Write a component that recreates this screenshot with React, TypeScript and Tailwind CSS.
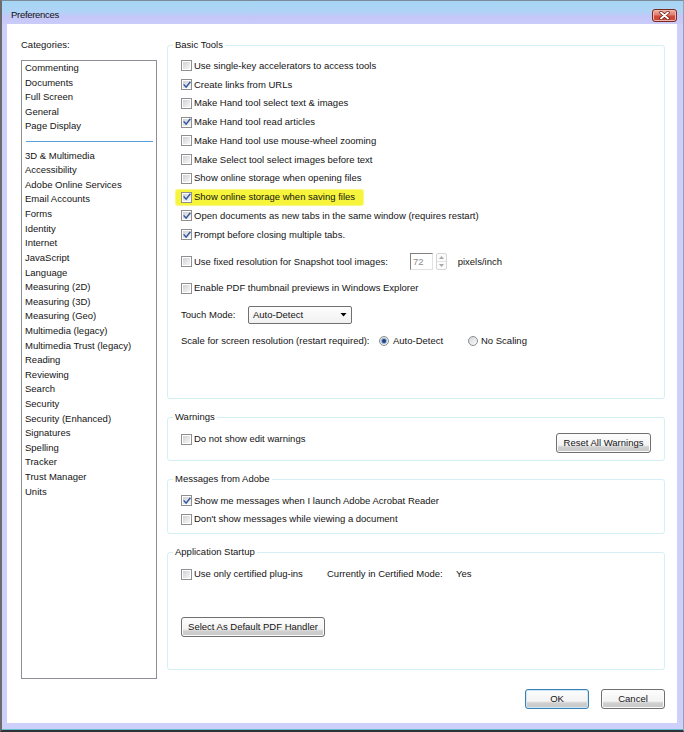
import React from "react";

function CheckMark() {
  return (
    <svg width="8" height="8" viewBox="0 0 8 8" className="block">
      <path d="M1.1 3.9 L3.1 6.1 L6.9 1.3" fill="none" stroke="#3356a0" strokeWidth="1.45" strokeLinecap="square" />
    </svg>
  );
}

function Check({ checked }: { checked?: boolean }) {
  return (
    <span className="w-[11px] h-[11px] shrink-0 border border-[#8f8f8f] bg-white p-px flex">
      <span className="flex-1 bg-[linear-gradient(135deg,#cfd1d5_0%,#f7f7f7_100%)] flex items-center justify-center">
        {checked && <CheckMark />}
      </span>
    </span>
  );
}

function Radio({ checked }: { checked?: boolean }) {
  return (
    <span className="w-[10px] h-[10px] shrink-0 rounded-full border border-[#8c8c8c] bg-[linear-gradient(135deg,#d4d6da_0%,#fbfbfb_100%)] flex items-center justify-center">
      {checked && <span className="w-[4px] h-[4px] rounded-full bg-[#23407a] shadow-[0_0_0_1px_#93b4dc]" />}
    </span>
  );
}

function CheckRow({ label, checked, className = "" }: { label: string; checked?: boolean; className?: string }) {
  return (
    <div className={`flex items-center gap-[2px] ${className}`}>
      <Check checked={checked} />
      <span className="whitespace-nowrap">{label}</span>
    </div>
  );
}

function Btn({ children, className = "", def }: { children: React.ReactNode; className?: string; def?: boolean }) {
  return (
    <div
      className={`flex items-center justify-center rounded-[3px] border whitespace-nowrap bg-[linear-gradient(to_bottom,#fdfdfd_0%,#f3f3f3_62%,#d0d0d0_72%,#c8c8c8_100%)] ${
        def ? "border-[#3c7fb1] shadow-[inset_0_0_0_1px_#cde8f8]" : "border-[#707070] shadow-[inset_0_0_0_1px_#fbfbfb]"
      } ${className}`}
    >
      {children}
    </div>
  );
}

function Group({ label, className = "", children }: { label: string; className?: string; children: React.ReactNode }) {
  return (
    <div className={`relative border border-[#d3f0f5] rounded-[3px] ${className}`}>
      <span className="absolute -top-[7px] left-[5px] bg-white px-[2px] leading-[12px] whitespace-nowrap">{label}</span>
      {children}
    </div>
  );
}

const categories = [
  "3D & Multimedia",
  "Accessibility",
  "Adobe Online Services",
  "Email Accounts",
  "Forms",
  "Identity",
  "Internet",
  "JavaScript",
  "Language",
  "Measuring (2D)",
  "Measuring (3D)",
  "Measuring (Geo)",
  "Multimedia (legacy)",
  "Multimedia Trust (legacy)",
  "Reading",
  "Reviewing",
  "Search",
  "Security",
  "Security (Enhanced)",
  "Signatures",
  "Spelling",
  "Tracker",
  "Trust Manager",
  "Units",
];

const topCats = ["Commenting", "Documents", "Full Screen", "General", "Page Display"];

const basic: { label: string; checked: boolean; hl?: boolean }[] = [
  { label: "Use single-key accelerators to access tools", checked: false },
  { label: "Create links from URLs", checked: true },
  { label: "Make Hand tool select text & images", checked: false },
  { label: "Make Hand tool read articles", checked: true },
  { label: "Make Hand tool use mouse-wheel zooming", checked: false },
  { label: "Make Select tool select images before text", checked: false },
  { label: "Show online storage when opening files", checked: false },
  { label: "Show online storage when saving files", checked: true, hl: true },
  { label: "Open documents as new tabs in the same window (requires restart)", checked: true },
  { label: "Prompt before closing multiple tabs.", checked: true },
];

export default function App() {
  return (
    <div className="w-[684px] h-[732px] flex flex-col border-l-[2px] border-l-[#6b6b6b] border-t border-t-[#7d8a98] border-b-[2px] border-b-[#2e3338] border-r border-r-[#9a9fb8] bg-[#cdd0fb] overflow-hidden font-['Liberation_Sans',Arial,sans-serif] text-[9.5px] leading-[12px] text-[#141414]">
      {/* Title bar */}
      <div className="h-[23px] shrink-0 flex items-start justify-between pl-[9px] pr-[6px] bg-[linear-gradient(to_bottom,#a6d5f4_0%,#afd4f6_45%,#c4c7f8_68%,#cacbf9_100%)]">
        <span className="pt-[8px] text-[9.5px] tracking-[-0.3px] text-[#111]">Preferences</span>
        <div className="mt-[8px] w-[25px] h-[13px] rounded-[3px] border border-[#7a2a20] bg-[linear-gradient(to_bottom,#eeb1a6_0%,#e27d6f_45%,#cf4a3a_55%,#c9493a_100%)] shadow-[inset_0_0_0_1px_#f1b9ae] flex items-center justify-center">
          <svg width="11" height="9" viewBox="0 0 11 9" className="block">
            <path d="M2 1.5 L9 7.5 M9 1.5 L2 7.5" stroke="#6a1d15" strokeWidth="3.4" strokeLinecap="round" />
            <path d="M2 1.5 L9 7.5 M9 1.5 L2 7.5" stroke="#ffffff" strokeWidth="1.9" strokeLinecap="round" />
          </svg>
        </div>
      </div>

      {/* Body */}
      <div className="ml-[5px] mr-[6px] h-[699px] shrink-0 bg-white flex">
        {/* Left column */}
        <div className="ml-[14px] w-[136px] pt-[15px] flex flex-col">
          <div className="h-[12px] leading-[12px]">Categories:</div>
          <div className="mt-[9px] h-[619px] border border-[#8c8f96] flex flex-col">
            {topCats.map((c) => (
              <div key={c} className="h-[14.62px] leading-[14.62px] pl-[3px] whitespace-nowrap">
                {c}
              </div>
            ))}
            <div className="h-[14.62px] flex items-center">
              <div className="ml-[4px] mr-[3px] flex-1 h-px bg-[#5d9fd8]" />
            </div>
            {categories.map((c) => (
              <div key={c} className="h-[14.62px] leading-[14.62px] pl-[3px] whitespace-nowrap">
                {c}
              </div>
            ))}
          </div>
        </div>

        {/* Right column */}
        <div className="ml-[10px] w-[498px] pt-[21px] flex flex-col">
          <Group label="Basic Tools" className="h-[354px] pt-[10.6px] pl-[13px]">
            {basic.map((b) =>
              b.hl ? (
                <div key={b.label} className="h-[18.75px] flex items-center">
                  <span className="-ml-[5px] pl-[5px] pr-[8px] h-[15px] flex items-center gap-[2px] bg-[#f6f53b] rounded-[2px] shadow-[0_0_1px_1px_#f8f77a]">
                    <Check checked />
                    <span className="whitespace-nowrap">{b.label}</span>
                  </span>
                </div>
              ) : (
                <CheckRow key={b.label} label={b.label} checked={b.checked} className="h-[18.75px]" />
              )
            )}
            <div className="mt-[7.6px] h-[20px] flex items-center">
              <Check />
              <span className="ml-[2px] w-[216px] whitespace-nowrap">Use fixed resolution for Snapshot tool images:</span>
              <div className="flex items-center gap-[3px]">
                <div className="w-[23px] h-[17px] border border-t-[#7f7f7f] border-l-[#7f7f7f] border-r-[#e2e2e2] border-b-[#e2e2e2] bg-white text-[#8c8c8c] pl-[2px] flex items-center">
                  72
                </div>
                <div className="w-[11px] h-[17px] border border-[#d6d6d6] rounded-[2px] flex flex-col bg-[#fbfbfb]">
                  <div className="flex-1 flex items-center justify-center border-b border-[#e4e4e4]">
                    <svg width="5" height="3" viewBox="0 0 5 3" className="block">
                      <path d="M0 3 L2.5 0 L5 3 Z" fill="#a8a8a8" />
                    </svg>
                  </div>
                  <div className="flex-1 flex items-center justify-center">
                    <svg width="5" height="3" viewBox="0 0 5 3" className="block">
                      <path d="M0 0 L5 0 L2.5 3 Z" fill="#a8a8a8" />
                    </svg>
                  </div>
                </div>
              </div>
              <span className="ml-[10.7px] whitespace-nowrap">pixels/inch</span>
            </div>
            <CheckRow label="Enable PDF thumbnail previews in Windows Explorer" className="mt-[6.6px] h-[20px]" />
            <div className="mt-[6.7px] h-[20px] flex items-center">
              <span className="w-[67px] whitespace-nowrap">Touch Mode:</span>
              <div className="w-[104px] h-[18px] border border-[#707070] rounded-[2px] bg-[linear-gradient(to_bottom,#fdfdfd,#f1f1f1)] flex items-center justify-between pl-[4px] pr-[4px]">
                <span className="whitespace-nowrap">Auto-Detect</span>
                <svg width="7" height="4" viewBox="0 0 7 4" className="block mt-[1px]">
                  <path d="M0.5 0 L6.5 0 L3.5 3.5 Z" fill="#000" />
                </svg>
              </div>
            </div>
            <div className="mt-[6px] h-[20px] flex items-center">
              <span className="w-[198px] whitespace-nowrap">Scale for screen resolution (restart required):</span>
              <Radio checked />
              <span className="ml-[4px] w-[75px] whitespace-nowrap">Auto-Detect</span>
              <Radio />
              <span className="ml-[3px] whitespace-nowrap">No Scaling</span>
            </div>
          </Group>

          <Group label="Warnings" className="mt-[18px] h-[44px] pt-[12.3px] pl-[13px] pr-[13px] flex items-start justify-between">
            <CheckRow label="Do not show edit warnings" className="h-[18px]" />
            <Btn className="mt-[2.4px] w-[95px] h-[20px]">Reset All Warnings</Btn>
          </Group>

          <Group label="Messages from Adobe" className="mt-[18px] h-[55px] pt-[11.4px] pl-[13px]">
            <CheckRow label="Show me messages when I launch Adobe Acrobat Reader" checked className="h-[18.6px]" />
            <CheckRow label="Don't show messages while viewing a document" className="h-[18.6px]" />
          </Group>

          <Group label="Application Startup" className="mt-[18px] h-[118px] pt-[12px] pl-[13px]">
            <div className="h-[18px] flex items-center">
              <Check />
              <span className="ml-[2px] w-[133px] whitespace-nowrap">Use only certified plug-ins</span>
              <span className="w-[129px] whitespace-nowrap">Currently in Certified Mode:</span>
              <span>Yes</span>
            </div>
            <Btn className="mt-[33.7px] w-[144px] h-[20px]">Select As Default PDF Handler</Btn>
          </Group>

          <div className="mt-[19.3px] flex justify-end gap-[12px]">
            <Btn def className="w-[64px] h-[20px]">
              OK
            </Btn>
            <Btn className="w-[64px] h-[20px]">Cancel</Btn>
          </div>
        </div>
      </div>

      <div className="h-[6px] shrink-0" />
      <div className="h-px shrink-0 bg-[#66bfd0]" />
    </div>
  );
}
